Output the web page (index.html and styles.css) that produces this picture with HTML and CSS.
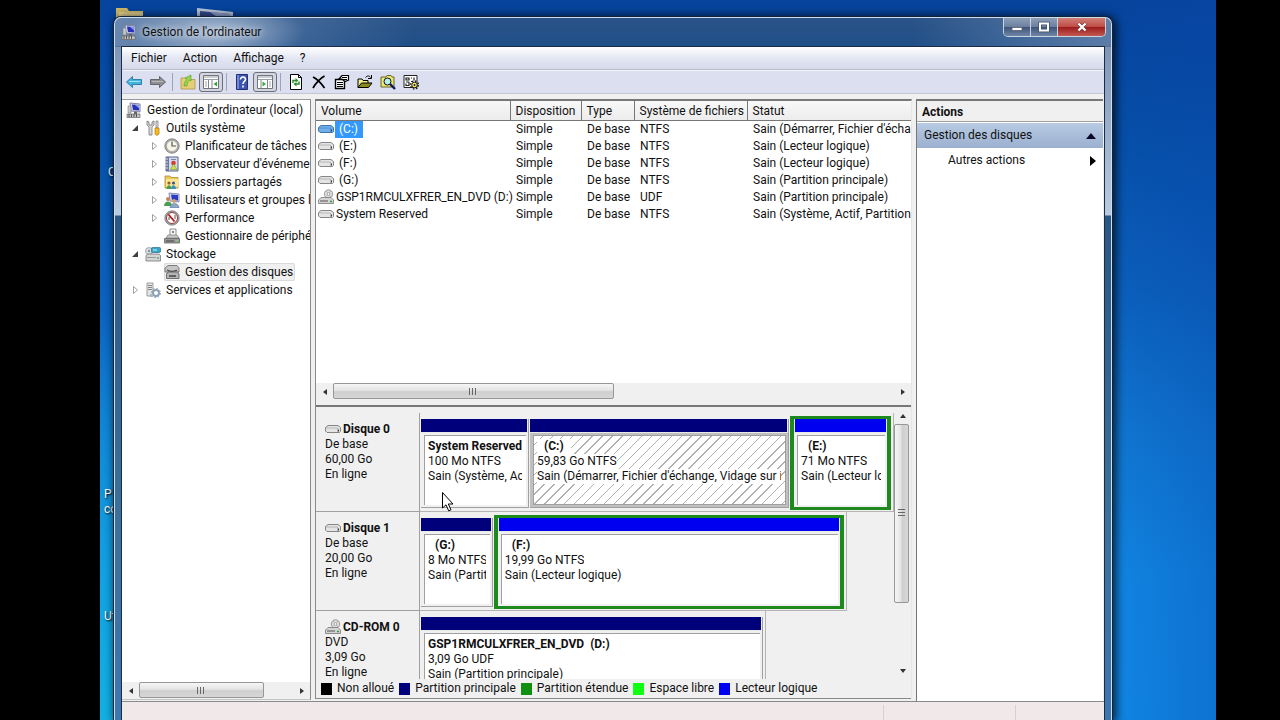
FILE: index.html
```html
<!DOCTYPE html>
<html lang="fr">
<head>
    <meta charset="UTF-8">
    <meta name="viewport" content="width=device-width, initial-scale=1.0">
    <title>Gestion de l'ordinateur</title>
    <link rel="stylesheet" href="styles.css">
</head>
<body>

<!-- Icônes réutilisées -->
<svg class="sprite" width="0" height="0" aria-hidden="true">
    <symbol id="i-computer" viewBox="0 0 16 16">
        <path d="M4 1l10 1v8l-9-1z" fill="#d5d8ea" stroke="#7c80a0"/>
        <path d="M6 2.500l7 .5v5.500l-6-.5z" fill="#2730b8"/>
        <path d="M9 3l4 .2v3z" fill="#8fa5f0"/>
        <path d="M2 4h3v7H2z" fill="#c8c8c8" stroke="#888" stroke-width=".6"/>
        <path d="M8 10h3v2H8z" fill="#666"/>
        <path d="M1 12h13v3.500H1z" fill="#c4c4c4" stroke="#666" stroke-width=".7"/>
        <path d="M3 12v3M5.500 12v3M8 12v3M10.500 12v3" stroke="#555"/>
    </symbol>
    <symbol id="i-tools" viewBox="0 0 16 16">
        <path d="M2 1v4l2 2v8h3V7l2-2V1L7 2v3H4V2z" fill="#d8d8d8" stroke="#777" stroke-width=".8"/>
        <path d="M11 1h2v7h-2z" fill="#ddd" stroke="#777" stroke-width=".7"/>
        <path d="M10 8h4v6l-2 1.500L10 14z" fill="#f3bb22" stroke="#b97a00" stroke-width=".7"/>
    </symbol>
    <symbol id="i-clock" viewBox="0 0 16 16">
        <circle cx="8" cy="8" r="7.200" fill="#aaa" stroke="#777" stroke-width=".8"/>
        <circle cx="8" cy="8" r="5.500" fill="#f7f5e6" stroke="#999" stroke-width=".6"/>
        <path d="M8 3.500V8h4" fill="none" stroke="#555" stroke-width="1.200"/>
    </symbol>
    <symbol id="i-event" viewBox="0 0 16 16">
        <path d="M2 1h12v14H2z" fill="#d4daea" stroke="#5b6388"/>
        <path d="M2 1h3v14H2z" fill="#6b76a8"/>
        <path d="M1 3h3M1 6h3M1 9h3M1 12h3" stroke="#ddd"/>
        <path d="M7 3.500h5" stroke="#7a84ac"/>
        <circle cx="9.500" cy="7" r="2.300" fill="#d83a2c"/>
        <path d="M6.500 13.500l3-5.500 3.500 5.500z" fill="#d9dc4a" stroke="#6a9a30" stroke-width=".6"/>
    </symbol>
    <symbol id="i-shared" viewBox="0 0 16 16">
        <path d="M1 4V2h5l1 1.500h7V14H1z" fill="#e9c95c" stroke="#b48c28" stroke-width=".8"/>
        <path d="M2 5h13l-1 8H2z" fill="#fbe693"/>
        <circle cx="5" cy="9" r="1.600" fill="#a05a32"/>
        <circle cx="9.500" cy="9" r="1.600" fill="#3b5a90"/>
        <path d="M2.500 15c0-5 5-5 5 0z" fill="#46a046"/>
        <path d="M7 15c0-5 5-5 5 0z" fill="#3e8fc8"/>
    </symbol>
    <symbol id="i-users" viewBox="0 0 16 16">
        <path d="M5 1l10 1v8l-9-1z" fill="#d3d9f0" stroke="#6d73a8" stroke-width=".8"/>
        <path d="M7 2.500l7 .5v5.500l-6-.5z" fill="#2c3cc0"/>
        <circle cx="4" cy="7" r="2" fill="#c08656"/>
        <path d="M0 14c0-6 8-6 8 0z" fill="#4a9e54"/>
        <circle cx="10" cy="9" r="2" fill="#d0a070"/>
        <path d="M6 16c0-6 9-6 9 0z" fill="#8aa8cc" stroke="#567" stroke-width=".5"/>
    </symbol>
    <symbol id="i-perf" viewBox="0 0 16 16">
        <circle cx="8" cy="8" r="7.200" fill="#aaa" stroke="#777" stroke-width=".8"/>
        <circle cx="8" cy="8" r="5.500" fill="#fff" stroke="#7a1c1c" stroke-width=".8"/>
        <path d="M4.500 4.500l6 7" fill="none" stroke="#b01818" stroke-width="1.800"/>
        <path d="M5 7v3M11 5v4" stroke="#555"/>
    </symbol>
    <symbol id="i-device" viewBox="0 0 16 16">
        <path d="M6 1h6v7H6z" fill="#f5f5f5" stroke="#777" stroke-width=".8"/>
        <path d="M8 3h2v2H8z" fill="#888"/>
        <path d="M2 10l2-3h9l2 3z" fill="#ccc" stroke="#777" stroke-width=".7"/>
        <path d="M.5 10.500h15v4.500H.5z" fill="#999" stroke="#555" stroke-width=".7"/>
        <path d="M2 13h8" stroke="#444"/>
        <path d="M12 13h2" stroke="#7be07b"/>
    </symbol>
    <symbol id="i-storage" viewBox="0 0 16 16">
        <circle cx="4" cy="5" r="3.500" fill="#d8dde2" stroke="#8a8f94" stroke-width=".7"/>
        <circle cx="4" cy="5" r="1" fill="#777"/>
        <rect x="6.500" y="1.500" width="9" height="5" rx="1" fill="#39a4c8" stroke="#23708c" stroke-width=".7"/>
        <path d="M8 4h4" stroke="#bff"/>
        <path d="M1 9.500L3 8h11l1.500 1.500V15H1z" fill="#d4d4d4" stroke="#777" stroke-width=".8"/>
        <path d="M2 11.500h9" stroke="#999"/>
        <path d="M13 11v2" stroke="#2c8c3c"/>
    </symbol>
    <symbol id="i-diskmgmt" viewBox="0 0 16 16">
        <path d="M1 4l3-2.500h9L15 4v4H1z" fill="#c6c6c6" stroke="#666" stroke-width=".8"/>
        <path d="M3 6c3 1.500 7 1.500 10 0" fill="none" stroke="#444" stroke-width="1.200"/>
        <path d="M2.500 10L4 8h9.500l1.500 2v4.500H2.500z" fill="#b4b4b4" stroke="#555" stroke-width=".8"/>
        <path d="M5 12h7" stroke="#444" stroke-width="1.500"/>
    </symbol>
    <symbol id="i-services" viewBox="0 0 16 16">
        <path d="M2 1h6v13H2z" fill="#e4e4e4" stroke="#888" stroke-width=".8"/>
        <path d="M3 3.500h4M3 5.500h4M3 7.500h4" stroke="#888"/>
        <circle cx="11" cy="11" r="3" fill="none" stroke="#8ca0b4" stroke-width="2"/>
        <circle cx="11" cy="11" r="4.500" fill="none" stroke="#8ca0b4" stroke-dasharray="1.800 1.700"/>
        <path d="M5 12h3v3H5z" fill="#a9b8c6"/>
    </symbol>
    <symbol id="i-drive" viewBox="0 0 16 16">
        <path d="M3 4.500h10l2.500 2v4l-1 1H2L.5 10V6.500z" fill="#e4e4e4" stroke="#7b7b7b" stroke-width=".9"/>
        <path d="M1 7h11.500v4" fill="none" stroke="#aaa" stroke-width=".8"/>
        <path d="M13.500 8.500v2" stroke="#333"/>
    </symbol>
    <symbol id="i-drive-blue" viewBox="0 0 16 16">
        <path d="M3 4.500h10l2.500 2v4l-1 1H2L.5 10V6.500z" fill="#6fb0ec" stroke="#34699c" stroke-width=".9"/>
        <path d="M1 7h11.500v4" fill="none" stroke="#4a89c6" stroke-width=".8"/>
        <path d="M13.500 8.500v2" stroke="#123a66"/>
    </symbol>
    <symbol id="i-dvd" viewBox="0 0 16 16">
        <circle cx="10.500" cy="5" r="4.200" fill="#ddd" stroke="#888" stroke-width=".8"/>
        <path d="M8 2l5 6M13 2L8.500 7" stroke="#b5b5b5"/>
        <circle cx="10.500" cy="5" r="1.300" fill="#fff" stroke="#888" stroke-width=".6"/>
        <path d="M.5 11L3 8.500h10l2.500 2.500v3.500H.5z" fill="#d4d4d4" stroke="#777" stroke-width=".8"/>
        <path d="M2 12h8" stroke="#555"/>
        <path d="M12 12.500h2" stroke="#2d9a3e" stroke-width="1.500"/>
    </symbol>
    <symbol id="i-open" viewBox="0 0 8 8">
        <path d="M7 1v6H1z" fill="#404040"/>
    </symbol>
    <symbol id="i-closed" viewBox="0 0 8 8">
        <path d="M2.500 .5v7l4-3.500z" fill="#fff" stroke="#a0a0a0"/>
    </symbol>
</svg>

<main class="desktop">
    <!-- Icônes du bureau, en partie sous la fenêtre -->
    <svg class="desk-icon desk-folder" viewBox="0 0 28 24" aria-hidden="true">
        <path d="M0 0h11l2 3h14v21H0z" fill="#cdb869"/><path d="M3 4l24 1v19H3z" fill="#e8d897"/>
    </svg>
    <svg class="desk-icon desk-computer" viewBox="0 0 38 24" aria-hidden="true">
        <path d="M1 0l36 4v20H1z" fill="#b9c6dc"/><path d="M4 3l30 3v18H4z" fill="#344b92"/><path d="M14 4l20 2v12z" fill="#92a6d4"/>
    </svg>
    <span class="desk-label label-a">C</span>
    <span class="desk-label label-b">P<br>co</span>
    <span class="desk-label label-c">Ut</span>

    <section class="window">
        <header class="titlebar">
            <svg class="icon"><use href="#i-computer"/></svg>
            <h1>Gestion de l'ordinateur</h1>
            <div class="caption">
                <button type="button" aria-label="Réduire"><svg viewBox="0 0 14 12"><path d="M2 6.500h10v3H2z" fill="#fff" stroke="#4a5566" stroke-width=".7"/></svg></button>
                <button type="button" aria-label="Agrandir"><svg viewBox="0 0 14 12"><path d="M3 2.500h8v7H3z" fill="none" stroke="#46506a" stroke-width="3.500"/><path d="M3 2.500h8v7H3z" fill="none" stroke="#fff" stroke-width="2"/></svg></button>
                <button type="button" class="close" aria-label="Fermer"><svg viewBox="0 0 14 12"><path d="M3.500 2.500l7 7M10.500 2.500l-7 7" stroke="#6a3030" stroke-width="3.600"/><path d="M3.500 2.500l7 7M10.500 2.500l-7 7" stroke="#fff" stroke-width="2.400"/></svg></button>
            </div>
        </header>

        <div class="client">
            <nav class="menubar">
                <button type="button">Fichier</button>
                <button type="button">Action</button>
                <button type="button">Affichage</button>
                <button type="button">?</button>
            </nav>

            <div class="toolbar">
                <button type="button" aria-label="Précédent"><svg class="icon" viewBox="0 0 16 16"><path d="M.5 8l6-5.500v3h9v5h-9v3z" fill="#44b4de" stroke="#2478a0" stroke-width=".9"/><path d="M3 7.500h11" stroke="#9be2f6"/></svg></button>
                <button type="button" aria-label="Suivant"><svg class="icon" viewBox="0 0 16 16"><path d="M15.500 8l-6-5.500v3h-9v5h9v3z" fill="#8e8e94" stroke="#5c5c62" stroke-width=".9"/><path d="M2 7.500h11" stroke="#b8b8bc"/></svg></button>
                <span class="separator"></span>
                <button type="button" aria-label="Dossier parent"><svg class="icon" viewBox="0 0 16 16"><path d="M1 4h6l1 1.500h7V15H1z" fill="#e6cd77" stroke="#ad9448" stroke-width=".8"/><path d="M4 12c0-3 1-5 3-6.500L5 4l6-3v6L9.500 6.500C7.500 8 7 10 7 12z" fill="#8fd84a" stroke="#5c9c28" stroke-width=".6"/></svg></button>
                <button type="button" class="pressed" aria-label="Arborescence de la console"><svg class="icon" viewBox="0 0 16 16"><path d="M.5 1.500h15v13H.5z" fill="#fff" stroke="#70757c"/><path d="M1 3h14M1 5.500h14" stroke="#9a9ea6"/><path d="M5.500 6v8M9 6v8" stroke="#80858c"/><path d="M2 8h2M2 10h2M2 12h2" stroke="#a3a7b0"/><path d="M14 7.500v5L10.500 10z" fill="#3aa63a"/></svg></button>
                <span class="separator"></span>
                <button type="button" aria-label="Aide"><svg class="icon" viewBox="0 0 16 16"><path d="M2.500 .5h11v15h-11z" fill="#3c54b0" stroke="#232f78"/><path d="M3 1h2v14H3z" fill="#7388d4"/><path d="M6.500 5.500c0-3.500 5-3 5 0 0 2-2.500 1.800-2.500 4.500M9 11.500v2" fill="none" stroke="#fff" stroke-width="1.600"/></svg></button>
                <button type="button" class="pressed" aria-label="Volet Actions"><svg class="icon" viewBox="0 0 16 16"><path d="M.5 1.500h15v13H.5z" fill="#fff" stroke="#70757c"/><path d="M1 3h14M1 5.500h14" stroke="#9a9ea6"/><path d="M4 6v8M10.500 6v8" stroke="#80858c"/><path d="M12 8h2M12 10h2M12 12h2" stroke="#a3a7b0"/><path d="M5.500 7.500v5L9 10z" fill="#3aa63a"/></svg></button>
                <span class="separator"></span>
                <button type="button" aria-label="Actualiser"><svg class="icon" viewBox="0 0 16 16"><path d="M2.500 .5h8l3 3v12h-11z" fill="#fff" stroke="#000"/><path d="M10.500 .5v3h3" fill="none" stroke="#000"/><path d="M5 9V6.500h3M11 7.500V10H8" fill="none" stroke="#2e8c2e" stroke-width="1.500"/><path d="M7.500 4v5L10.500 6.500zM8.500 7.500v5L5.500 10z" fill="#2e8c2e"/></svg></button>
                <button type="button" aria-label="Supprimer"><svg class="icon" viewBox="0 0 16 16"><path d="M2 3c4 2 8 6 11.500 11M13.500 2C8 5 5 9 2 14" fill="none" stroke="#000" stroke-width="1.800"/></svg></button>
                <button type="button" aria-label="Propriétés"><svg class="icon" viewBox="0 0 16 16"><path d="M1.500 5.500h9v9h-9z" fill="#fff" stroke="#000" stroke-width="1.400"/><path d="M3 8.500h6M3 10.500h6M3 12.500h6" stroke="#000"/><path d="M5 5l3-3.500h6.500V6L11 7.500 8 5z" fill="#fff" stroke="#000" stroke-width="1.200"/><path d="M8 3.500h5M9 5.500h4" stroke="#000"/></svg></button>
                <button type="button" aria-label="Ouvrir"><svg class="icon" viewBox="0 0 16 16"><path d="M1 13.500V5h4l1 1.500h5V9" fill="#f0ee8c" stroke="#000"/><path d="M1 13.500L4.500 9H15l-3.500 4.500z" fill="#8a8a1c" stroke="#000"/><path d="M8.500 3.500c1.500-2 4-2 5 0M14.500 1v3.500H11" fill="none" stroke="#000"/></svg></button>
                <button type="button" aria-label="Explorer"><svg class="icon" viewBox="0 0 16 16"><path d="M1 3h5l1-1.500h4L12 3h2v10H1z" fill="#eae67a" stroke="#66661c"/><circle cx="7.500" cy="7.500" r="3.500" fill="#b8f0f0" stroke="#111"/><path d="M10 10l5 5" stroke="#111a60" stroke-width="2.400"/></svg></button>
                <button type="button" aria-label="Paramètres"><svg class="icon" viewBox="0 0 16 16"><path d="M1 1.500h13v12H1z" fill="#fff" stroke="#222"/><path d="M3 4h3v2H3zM8 4h1M11 3.500v3M3 8h3M3 9.500v2h3V8M8 7.500h2" fill="none" stroke="#222" stroke-width="1.200"/><circle cx="11.500" cy="11" r="4" fill="none" stroke="#222" stroke-width="1.500" stroke-dasharray="1.500 1.640"/><circle cx="11.500" cy="11" r="2.800" fill="#f4ec5a" stroke="#222"/><circle cx="11.500" cy="11" r="1" fill="#222"/></svg></button>
            </div>

            <div class="panes">
                <!-- Arborescence -->
                <aside class="tree-pane">
                    <ul class="tree">
                        <li class="root"><a href="#"><svg class="icon"><use href="#i-computer"/></svg><span>Gestion de l'ordinateur (local)</span></a></li>
                        <li class="level-1"><svg class="twisty"><use href="#i-open"/></svg><a href="#"><svg class="icon"><use href="#i-tools"/></svg><span>Outils système</span></a></li>
                        <li class="level-2"><svg class="twisty"><use href="#i-closed"/></svg><a href="#"><svg class="icon"><use href="#i-clock"/></svg><span>Planificateur de tâches</span></a></li>
                        <li class="level-2"><svg class="twisty"><use href="#i-closed"/></svg><a href="#"><svg class="icon"><use href="#i-event"/></svg><span>Observateur d'événements</span></a></li>
                        <li class="level-2"><svg class="twisty"><use href="#i-closed"/></svg><a href="#"><svg class="icon"><use href="#i-shared"/></svg><span>Dossiers partagés</span></a></li>
                        <li class="level-2"><svg class="twisty"><use href="#i-closed"/></svg><a href="#"><svg class="icon"><use href="#i-users"/></svg><span>Utilisateurs et groupes locaux</span></a></li>
                        <li class="level-2"><svg class="twisty"><use href="#i-closed"/></svg><a href="#"><svg class="icon"><use href="#i-perf"/></svg><span>Performance</span></a></li>
                        <li class="level-2"><svg class="twisty"></svg><a href="#"><svg class="icon"><use href="#i-device"/></svg><span>Gestionnaire de périphériques</span></a></li>
                        <li class="level-1"><svg class="twisty"><use href="#i-open"/></svg><a href="#"><svg class="icon"><use href="#i-storage"/></svg><span>Stockage</span></a></li>
                        <li class="level-2"><svg class="twisty"></svg><a href="#" class="selected"><svg class="icon"><use href="#i-diskmgmt"/></svg><span>Gestion des disques</span></a></li>
                        <li class="level-1"><svg class="twisty"><use href="#i-closed"/></svg><a href="#"><svg class="icon"><use href="#i-services"/></svg><span>Services et applications</span></a></li>
                    </ul>
                    <div class="hscroll">
                        <button type="button" class="arrow left" aria-label="Défiler à gauche"></button>
                        <div class="track"><div class="thumb tree-thumb"></div></div>
                        <button type="button" class="arrow right" aria-label="Défiler à droite"></button>
                    </div>
                </aside>

                <!-- Volumes et disques -->
                <section class="center-pane">
                    <div class="volumes">
                        <table>
                            <colgroup>
                                <col class="col-volume"><col class="col-layout"><col class="col-type"><col class="col-fs"><col class="col-status">
                            </colgroup>
                            <thead>
                                <tr><th>Volume</th><th>Disposition</th><th>Type</th><th>Système de fichiers</th><th>Statut</th></tr>
                            </thead>
                            <tbody>
                                <tr class="selected"><td><svg class="icon"><use href="#i-drive-blue"/></svg><span class="letter">(C:)</span></td><td>Simple</td><td>De base</td><td>NTFS</td><td>Sain (Démarrer, Fichier d'échange, Vidage sur incident)</td></tr>
                                <tr><td><svg class="icon"><use href="#i-drive"/></svg><span class="letter">(E:)</span></td><td>Simple</td><td>De base</td><td>NTFS</td><td>Sain (Lecteur logique)</td></tr>
                                <tr><td><svg class="icon"><use href="#i-drive"/></svg><span class="letter">(F:)</span></td><td>Simple</td><td>De base</td><td>NTFS</td><td>Sain (Lecteur logique)</td></tr>
                                <tr><td><svg class="icon"><use href="#i-drive"/></svg><span class="letter">(G:)</span></td><td>Simple</td><td>De base</td><td>NTFS</td><td>Sain (Partition principale)</td></tr>
                                <tr><td><svg class="icon"><use href="#i-dvd"/></svg><span>GSP1RMCULXFRER_EN_DVD (D:)</span></td><td>Simple</td><td>De base</td><td>UDF</td><td>Sain (Partition principale)</td></tr>
                                <tr><td><svg class="icon"><use href="#i-drive"/></svg><span>System Reserved</span></td><td>Simple</td><td>De base</td><td>NTFS</td><td>Sain (Système, Actif, Partition principale)</td></tr>
                            </tbody>
                        </table>
                    </div>
                    <div class="hscroll">
                        <button type="button" class="arrow left" aria-label="Défiler à gauche"></button>
                        <div class="track"><div class="thumb volumes-thumb"></div></div>
                        <button type="button" class="arrow right" aria-label="Défiler à droite"></button>
                    </div>
                    <div class="splitter"></div>

                    <div class="disks">
                        <div class="disk-list">
                            <div class="disk">
                                <div class="disk-info">
                                    <h2><svg class="icon"><use href="#i-drive"/></svg>Disque 0</h2>
                                    <p>De base</p><p>60,00 Go</p><p>En ligne</p>
                                </div>
                                <div class="disk-map">
                                    <div class="partition primary" style="flex-grow: 107">
                                        <div class="bar"></div>
                                        <div class="body"><strong>System Reserved</strong><span>100 Mo NTFS</span><span>Sain (Système, Actif, Partition principale)</span></div>
                                    </div>
                                    <div class="partition primary active" style="flex-grow: 258">
                                        <div class="bar"></div>
                                        <div class="body"><strong class="letter">(C:)</strong><span>59,83 Go NTFS</span><span>Sain (Démarrer, Fichier d'échange, Vidage sur incident)</span></div>
                                    </div>
                                    <div class="partition logical" style="flex-grow: 93">
                                        <div class="bar"></div>
                                        <div class="body"><strong class="letter">(E:)</strong><span>71 Mo NTFS</span><span>Sain (Lecteur logique)</span></div>
                                    </div>
                                </div>
                            </div>
                            <div class="disk">
                                <div class="disk-info">
                                    <h2><svg class="icon"><use href="#i-drive"/></svg>Disque 1</h2>
                                    <p>De base</p><p>20,00 Go</p><p>En ligne</p>
                                </div>
                                <div class="disk-map" style="width: 90%">
                                    <div class="partition primary" style="flex-grow: 71">
                                        <div class="bar"></div>
                                        <div class="body"><strong class="letter">(G:)</strong><span>8 Mo NTFS</span><span>Sain (Partition principale)</span></div>
                                    </div>
                                    <div class="partition logical" style="flex-grow: 343">
                                        <div class="bar"></div>
                                        <div class="body"><strong class="letter">(F:)</strong><span>19,99 Go NTFS</span><span>Sain (Lecteur logique)</span></div>
                                    </div>
                                </div>
                            </div>
                            <div class="disk">
                                <div class="disk-info">
                                    <h2><svg class="icon"><use href="#i-dvd"/></svg>CD-ROM 0</h2>
                                    <p>DVD</p><p>3,09 Go</p><p>En ligne</p>
                                </div>
                                <div class="disk-map" style="width: 73%">
                                    <div class="partition primary" style="flex-grow: 1">
                                        <div class="bar"></div>
                                        <div class="body"><strong>GSP1RMCULXFRER_EN_DVD&nbsp; (D:)</strong><span>3,09 Go UDF</span><span>Sain (Partition principale)</span></div>
                                    </div>
                                </div>
                            </div>
                        </div>
                        <div class="vscroll">
                            <button type="button" class="arrow up" aria-label="Défiler vers le haut"></button>
                            <div class="track"><div class="thumb"></div></div>
                            <button type="button" class="arrow down" aria-label="Défiler vers le bas"></button>
                        </div>
                    </div>

                    <ul class="legend">
                        <li><i class="swatch unallocated"></i>Non alloué</li>
                        <li><i class="swatch primary"></i>Partition principale</li>
                        <li><i class="swatch extended"></i>Partition étendue</li>
                        <li><i class="swatch free"></i>Espace libre</li>
                        <li><i class="swatch logical"></i>Lecteur logique</li>
                    </ul>
                </section>

                <!-- Actions -->
                <aside class="actions-pane">
                    <h2>Actions</h2>
                    <button type="button" class="group">Gestion des disques <svg viewBox="0 0 10 6"><path d="M5 0l5 6H0z" fill="#0a0a28"/></svg></button>
                    <button type="button" class="item">Autres actions <svg viewBox="0 0 6 10"><path d="M0 0l6 5-6 5z" fill="#000"/></svg></button>
                </aside>
            </div>

            <footer class="statusbar"><span></span><span></span><span></span></footer>
        </div>
    </section>

    <svg class="cursor" viewBox="0 0 12 20" aria-hidden="true"><path d="M.5 .5v15.500l3.500-3.200 2.700 6 2.300-1-2.700-5.800H11z" fill="#fff" stroke="#000"/></svg>
</main>

</body>
</html>
```
FILE: styles.css
```css
* {
    box-sizing: border-box;
}
body {
    margin: 0;
    background: #000;
    color: #111;
    font-family: Roboto, "Open Sans", sans-serif;
    font-size: 12px;
    line-height: 15px;
}
h1, h2, p, ul {
    margin: 0;
    padding: 0;
    font-size: 12px;
    list-style: none;
}
button {
    padding: 0;
    border: none;
    background: none;
    color: inherit;
    font: inherit;
}
a {
    color: inherit;
    text-decoration: none;
}
.sprite {
    position: absolute;
}
.icon {
    flex: none;
    width: 16px;
    height: 16px;
}

/* Bureau */
.desktop {
    position: relative;
    height: 100vh;
    margin: 0 64px 0 100px;
    overflow: hidden;
    background:
        radial-gradient(ellipse 40% 55% at 0% 100%, #12b0e2, rgba(18, 176, 226, 0)),
        linear-gradient(90deg, rgba(5, 60, 150, 0) 89%, rgba(8, 70, 170, 0.35) 100%),
        linear-gradient(#06439c 0%, #0650a8 20%, #0b60bc 40%, #1078d2 60%, #1188e4 80%, #1189e6 100%);
}
.desk-icon {
    position: absolute;
    top: 8px;
    height: 24px;
}
.desk-folder {
    left: 16px;
    width: 28px;
}
.desk-computer {
    left: 96px;
    width: 38px;
}
.desk-label {
    position: absolute;
    left: 4px;
    color: #fff;
    text-shadow: 1px 1px 2px #000;
}
.label-a {
    top: 165px;
    left: 8px;
}
.label-b {
    top: 487px;
}
.label-c {
    top: 609px;
}

/* Fenêtre */
.window {
    position: absolute;
    top: 17px;
    right: 104px;
    bottom: 0;
    left: 14px;
    display: flex;
    flex-direction: column;
    padding: 0 6px;
    border: 1px solid #cfdcec;
    border-bottom: none;
    border-radius: 7px 7px 0 0;
    background:
        radial-gradient(ellipse 90px 30px at 100px 14px, rgba(200, 212, 228, 0.75), rgba(200, 212, 228, 0)),
        linear-gradient(90deg, rgba(150, 170, 200, 0.6), rgba(30, 80, 140, 0) 30%, rgba(30, 80, 140, 0) 80%, rgba(150, 170, 200, 0.5)) top / 100% 28px no-repeat,
        linear-gradient(#2a5388 0, #1f4f88 28px, #7f96b8 29px, #b9cbe0 197px, #2a5684 198px, #3a7098 480px, #3e76b0 100%);
    box-shadow: 0 0 0 1px #10243c, 2px 1px 10px 2px rgba(0, 0, 0, 0.75);
}
.titlebar {
    display: flex;
    align-items: flex-start;
    gap: 5px;
    height: 28px;
}
.titlebar .icon {
    margin-top: 6px;
}
.titlebar h1 {
    flex: 1;
    margin-top: 7px;
    font-weight: normal;
    text-shadow: 0 0 6px #fff;
}
.caption {
    display: flex;
    border: 1px solid #c8d4e2;
    border-top: none;
    border-radius: 0 0 5px 5px;
    margin-right: -1px;
    overflow: hidden;
}
.caption button {
    width: 27px;
    height: 18px;
    border-right: 1px solid #c8d4e2;
    background: linear-gradient(#8e9fb8, #6b7f9f 50%, #3d5478 51%, #6f86a8);
}
.caption svg {
    display: block;
    width: 14px;
    height: 12px;
    margin: 0 auto;
}
.caption .close {
    width: 47px;
    border-right: none;
    background: linear-gradient(#d08078, #c04a44 50%, #9c1a1c 51%, #c25a50);
}
.client {
    display: flex;
    flex: 1;
    flex-direction: column;
    min-height: 0;
    border: 1px solid #1c2c44;
    border-bottom: none;
    background: #f0f0f0;
}
.menubar {
    display: flex;
    gap: 16px;
    height: 23px;
    padding: 0 9px;
    border-bottom: 1px solid #b8bccb;
    background: linear-gradient(#fff, #e4e7f3 50%, #d5d9eb);
}
.toolbar {
    display: flex;
    align-items: center;
    height: 24px;
    padding: 0 4px;
    border-top: 1px solid #f4f5fb;
    border-bottom: 1px solid #c3c5d2;
    background: #dcdff0;
}
.toolbar button {
    display: flex;
    align-items: center;
    justify-content: center;
    width: 23px;
    height: 20px;
}
.toolbar button:first-child {
    width: 16px;
    margin-right: 4px;
}
.toolbar .pressed {
    width: 24px;
    border: 1px solid #6b6f7a;
    border-radius: 3px;
    background: #d3d5e0;
}
.separator {
    width: 1px;
    height: 18px;
    margin: 0 3px;
    background: #a0a3b4;
}

/* Volets */
.panes {
    display: grid;
    flex: 1;
    grid-template-columns: 189px 1fr 188px;
    gap: 4px;
    min-height: 0;
    padding-top: 5px;
    border-bottom: 1px solid #8a8a8a;
}
.tree-pane {
    display: flex;
    flex-direction: column;
    min-width: 0;
    margin-bottom: 1px;
    border-top: 1px solid #9a9a9a;
    border-right: 1px solid #8a8a8a;
    border-bottom: 1px solid #c4c4c4;
    background: #fff;
}
.tree {
    flex: 1;
    padding-top: 1px;
    overflow: hidden;
}
.tree li {
    display: flex;
    align-items: center;
    height: 18px;
    white-space: nowrap;
}
.tree a {
    display: flex;
    align-items: center;
    gap: 3px;
}
.tree a span {
    padding: 0 2px;
}
.tree .root {
    padding-left: 4px;
}
.tree .level-1 {
    padding-left: 9px;
}
.tree .level-2 {
    padding-left: 28px;
}
.tree .selected {
    height: 18px;
    border-radius: 2px;
    background: #f0f0f0;
    box-shadow: 0 0 0 1px #dadada inset;
}
.twisty {
    flex: none;
    width: 8px;
    height: 8px;
    margin-right: 6px;
}

/* Barres de défilement */
.hscroll, .vscroll {
    display: flex;
    flex: none;
    background: #f0f0f0;
}
.hscroll {
    height: 17px;
}
.vscroll {
    flex-direction: column;
    width: 17px;
}
.track {
    display: flex;
    flex: 1;
}
.thumb {
    border: 1px solid #979797;
    border-radius: 2px;
    background:
        repeating-linear-gradient(90deg, #666 0 1px, transparent 1px 3px) center / 8px 7px no-repeat,
        linear-gradient(#f6f6f6, #e4e4e4 45%, #cfcfcf 55%, #d6d6d6);
}
.hscroll .thumb {
    height: 16px;
}
.tree-thumb {
    width: 81%;
}
.volumes-thumb {
    width: 50%;
}
.vscroll .track {
    flex-direction: column;
}
.vscroll .thumb {
    height: 75%;
    width: 15px;
    background:
        repeating-linear-gradient(#666 0 1px, transparent 1px 3px) center / 7px 8px no-repeat,
        linear-gradient(90deg, #f6f6f6, #e4e4e4 45%, #cfcfcf 55%, #d6d6d6);
}
.arrow {
    display: grid;
    flex: none;
    place-items: center;
    width: 17px;
    height: 17px;
}
.arrow::before {
    content: "";
    border: 3px solid transparent;
}
.arrow.left::before {
    border-right: 4px solid #333;
    border-left: none;
}
.arrow.right::before {
    border-right: none;
    border-left: 4px solid #333;
}
.arrow.up::before {
    border-top: none;
    border-bottom: 4px solid #333;
}
.arrow.down::before {
    border-top: 4px solid #333;
    border-bottom: none;
}

/* Liste des volumes */
.center-pane {
    display: flex;
    flex-direction: column;
    min-width: 0;
    min-height: 0;
    margin-bottom: 2px;
    border: 1px solid #8a8a8a;
    border-top: 2px solid #777;
    border-right-color: #e6e6e6;
    border-bottom: none;
}
.volumes {
    flex: 282 1 0;
    min-height: 0;
    overflow: hidden;
    background: #fff;
}
.volumes table {
    width: 100%;
    border-collapse: collapse;
    table-layout: fixed;
}
.col-volume {
    width: 194px;
}
.col-layout {
    width: 71px;
}
.col-type {
    width: 53px;
}
.col-fs {
    width: 113px;
}
.volumes th {
    height: 19px;
    padding: 2px 0 0 5px;
    border-right: 1px solid #777;
    border-bottom: 1px solid #777;
    background: linear-gradient(#f8f8f8, #ececec);
    font-weight: normal;
    text-align: left;
    white-space: nowrap;
}
.volumes th:last-child {
    border-right: none;
}
.volumes td {
    height: 17px;
    padding: 0 0 0 6px;
    overflow: hidden;
    white-space: nowrap;
}
.volumes td:first-child {
    display: flex;
    align-items: center;
    gap: 1px;
    padding-left: 2px;
    overflow: visible;
}
.volumes td span {
    padding: 1px 1px;
}
.volumes td .letter {
    padding: 1px 5px 1px 4px;
}
.volumes .selected .letter {
    background: #3399ff;
    color: #fff;
}
.splitter {
    height: 7px;
    border-bottom: 2px solid #777;
    background: #f0f0f0;
}

/* Disques */
.disks {
    display: flex;
    flex: 272 1 0;
    min-height: 0;
    overflow: hidden;
}
.disk-list {
    flex: 1;
    min-width: 0;
    padding-top: 6px;
}
.disk {
    display: grid;
    grid-template-columns: 104px 1fr;
    height: 99px;
}
.disk-info {
    padding: 8px 0 0 9px;
    border-right: 1px solid #a0a0a0;
    border-bottom: 1px solid #a0a0a0;
}
.disk-info h2 {
    display: flex;
    align-items: center;
    gap: 2px;
    height: 16px;
    white-space: nowrap;
}
.disk-map {
    display: flex;
    gap: 1px;
    min-width: 0;
    padding: 3px 2px 1px 1px;
    border-right: 1px solid #b4b4b4;
    border-bottom: 1px solid #b4b4b4;
}
.partition {
    display: flex;
    flex: 1 1 0;
    flex-direction: column;
    min-width: 0;
}
.partition.primary {
    margin: 3px 0 2px;
    border-right: 1px solid #a0a0a0;
    border-bottom: 1px solid #a0a0a0;
}
.partition.logical {
    border: solid #1e8a1e;
    border-width: 3px 4px;
}
.bar {
    flex: none;
    height: 14px;
    border: 1px solid #e8e8e8;
    border-top: none;
    border-left: none;
    background: #00007b;
}
.logical .bar {
    border-left: 1px solid #e8e8e8;
    background: #0000f0;
}
.body {
    display: flex;
    flex: 1;
    flex-direction: column;
    align-items: flex-start;
    margin: 2px 2px 2px 3px;
    padding: 3px 4px 0 3px;
    border-top: 1px solid #a0a0a0;
    border-left: 1px solid #a0a0a0;
    background: #fff;
    overflow: hidden;
    white-space: nowrap;
}
.body strong, .body span {
    max-width: 100%;
    overflow: hidden;
}
.body .letter {
    padding: 0 7px;
}
.active {
    background: #c0c0c0;
}
.active .body {
    border: 1px solid #a0a0a0;
    background: repeating-linear-gradient(135deg, #fff 0 6px, #b0b0b0 6px 7px);
}
.active .body strong, .active .body span {
    background: #fff;
}
.legend {
    display: flex;
    gap: 5px;
    align-items: center;
    height: 20px;
    padding-left: 5px;
    border-bottom: 1px solid #8a8a8a;
    white-space: nowrap;
}
.legend li {
    display: flex;
    align-items: center;
    gap: 5px;
}
.swatch {
    width: 11px;
    height: 12px;
    background: #000;
}
.swatch.primary {
    background: #00007b;
}
.swatch.extended {
    background: #109010;
}
.swatch.free {
    background: #10ff10;
}
.swatch.logical {
    background: #0000f0;
}

/* Actions */
.actions-pane {
    display: flex;
    flex-direction: column;
    margin-right: 1px;
    border-top: 2px solid #777;
    border-left: 1px solid #777;
    background: #fff;
}
.actions-pane h2 {
    height: 21px;
    padding: 4px 5px 2px;
    border-bottom: 1px solid #a0a0a0;
    background: #f0f0f0;
}
.actions-pane button {
    display: flex;
    align-items: center;
    justify-content: space-between;
    height: 25px;
    padding: 0 7px;
}
.actions-pane .group {
    margin-top: 1px;
    background: linear-gradient(#b8cbe3, #9bb0cf);
}
.group svg {
    width: 10px;
    height: 6px;
}
.actions-pane .item {
    padding-left: 31px;
}
.item svg {
    width: 6px;
    height: 10px;
}
.statusbar {
    display: grid;
    grid-template-columns: 1fr 132px 88px;
    height: 18px;
    padding-top: 3px;
    background: #f1e9e9;
}
.statusbar span {
    border-right: 1px solid #d8d0d0;
}
.statusbar span:last-child {
    border-right: none;
}
.cursor {
    position: absolute;
    top: 492px;
    left: 342px;
    width: 12px;
    height: 20px;
}
```
